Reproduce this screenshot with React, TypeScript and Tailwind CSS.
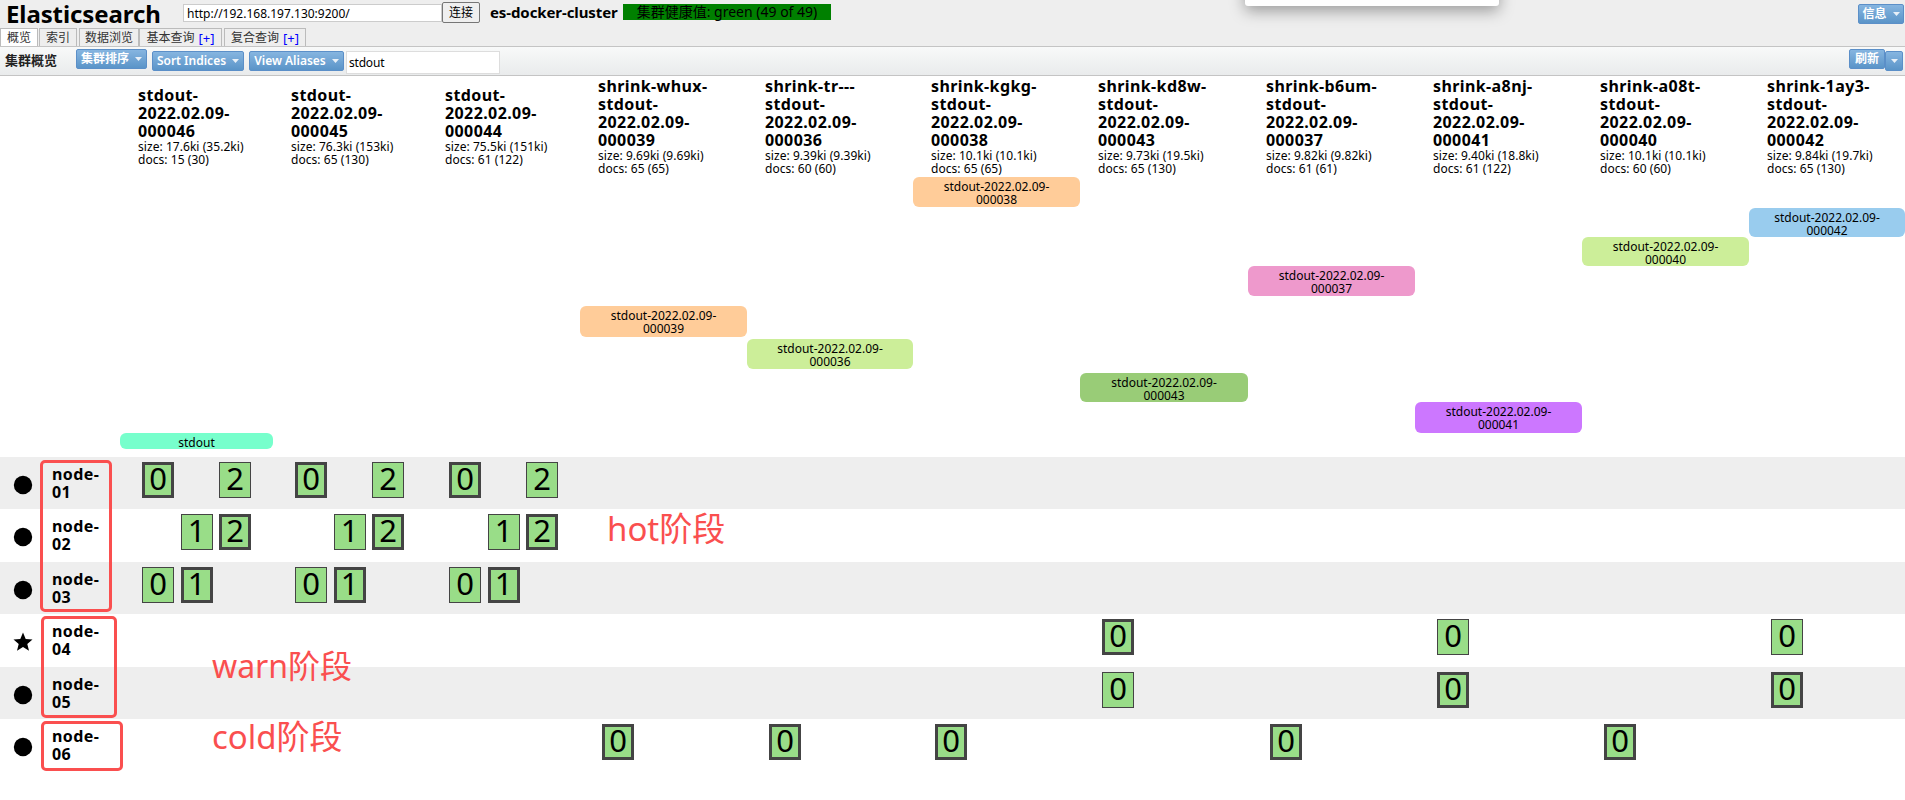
import React from "react";

const F = "font-['Tahoma','Noto_Sans','Noto_Sans_CJK_SC',sans-serif]";

const Caret = () => (
  <svg width="7" height="4" viewBox="0 0 7 4" className="shrink-0">
    <path d="M0 0h7L3.5 4z" fill="#e8f0f8" />
  </svg>
);

const BTN =
  "flex items-center justify-center gap-[6px] h-[20px] rounded-[2px] border border-[#5b8fc8] bg-gradient-to-b from-[#86b5e0] to-[#5a94c8] text-white text-[12px] font-semibold font-['Noto_Sans','Noto_Sans_CJK_SC',sans-serif]";

const tabs = [
  { w: "w-[38px]", t: "概览", active: true },
  { w: "w-[38px] ml-[1px]", t: "索引" },
  { w: "w-[60px] ml-[2px]", t: "数据浏览" },
  { w: "w-[83px] ml-[0px]", t: "基本查询", plus: true },
  { w: "w-[82px] ml-[2px]", t: "复合查询", plus: true },
];

const cols = [
  { h: ["stdout-", "2022.02.09-", "000046"], s: "size: 17.6ki (35.2ki)", d: "docs: 15 (30)" },
  { h: ["stdout-", "2022.02.09-", "000045"], s: "size: 76.3ki (153ki)", d: "docs: 65 (130)" },
  { h: ["stdout-", "2022.02.09-", "000044"], s: "size: 75.5ki (151ki)", d: "docs: 61 (122)" },
  { h: ["shrink-whux-", "stdout-", "2022.02.09-", "000039"], s: "size: 9.69ki (9.69ki)", d: "docs: 65 (65)" },
  { h: ["shrink-tr---", "stdout-", "2022.02.09-", "000036"], s: "size: 9.39ki (9.39ki)", d: "docs: 60 (60)" },
  { h: ["shrink-kgkg-", "stdout-", "2022.02.09-", "000038"], s: "size: 10.1ki (10.1ki)", d: "docs: 65 (65)" },
  { h: ["shrink-kd8w-", "stdout-", "2022.02.09-", "000043"], s: "size: 9.73ki (19.5ki)", d: "docs: 65 (130)" },
  { h: ["shrink-b6um-", "stdout-", "2022.02.09-", "000037"], s: "size: 9.82ki (9.82ki)", d: "docs: 61 (61)" },
  { h: ["shrink-a8nj-", "stdout-", "2022.02.09-", "000041"], s: "size: 9.40ki (18.8ki)", d: "docs: 61 (122)" },
  { h: ["shrink-a08t-", "stdout-", "2022.02.09-", "000040"], s: "size: 10.1ki (10.1ki)", d: "docs: 60 (60)" },
  { h: ["shrink-1ay3-", "stdout-", "2022.02.09-", "000042"], s: "size: 9.84ki (19.7ki)", d: "docs: 65 (130)" },
];

// column (1-based among index columns), row track, label, colour
const aliases = [
  { c: 6, r: 1, t: ["stdout-2022.02.09-", "000038"], bg: "#ffcc99" },
  { c: 11, r: 3, t: ["stdout-2022.02.09-", "000042"], bg: "#99ccee" },
  { c: 10, r: 5, t: ["stdout-2022.02.09-", "000040"], bg: "#ccee99" },
  { c: 8, r: 7, t: ["stdout-2022.02.09-", "000037"], bg: "#ee99cc" },
  { c: 4, r: 9, t: ["stdout-2022.02.09-", "000039"], bg: "#ffcc99" },
  { c: 5, r: 11, t: ["stdout-2022.02.09-", "000036"], bg: "#ccee99" },
  { c: 7, r: 13, t: ["stdout-2022.02.09-", "000043"], bg: "#99cc77" },
  { c: 9, r: 15, t: ["stdout-2022.02.09-", "000041"], bg: "#cc77ff" },
  { c: 1, r: 17, t: ["stdout"], bg: "#77ffcc" },
];

type S = [number, boolean] | null;
const P = (n: number): S => [n, true];
const R = (n: number): S => [n, false];
const X: S = null;

const hotA: S[][] = [
  [P(0), X, R(2)],
  [X, R(1), P(2)],
  [R(0), P(1), X],
];

const nodes: { n: string; star?: boolean; h: string; shards: Record<number, S[]> }[] = [
  { n: "01", h: "h-[52px]", shards: { 0: hotA[0], 1: hotA[0], 2: hotA[0] } },
  { n: "02", h: "h-[53px]", shards: { 0: hotA[1], 1: hotA[1], 2: hotA[1] } },
  { n: "03", h: "h-[52px]", shards: { 0: hotA[2], 1: hotA[2], 2: hotA[2] } },
  { n: "04", star: true, h: "h-[53px]", shards: { 6: [P(0)], 8: [R(0)], 10: [R(0)] } },
  { n: "05", h: "h-[52px]", shards: { 6: [R(0)], 8: [P(0)], 10: [P(0)] } },
  { n: "06", h: "h-[52px]", shards: { 3: [P(0)], 4: [P(0)], 5: [P(0)], 7: [P(0)], 9: [P(0)] } },
];

const COLS = "grid-cols-[120px_153px_154px_153px_167px_166px_167px_168px_167px_167px_167px_156px]";

const Shard = ({ s }: { s: S }) =>
  s ? (
    <div
      className={`w-[32px] h-[36px] shrink-0 mr-[6.5px] pb-[3px] flex items-center justify-center bg-[#99dd88] border-[#444444] text-[31px] leading-none text-black font-['Noto_Sans',sans-serif] ${
        s[1] ? "border-[3px]" : "border"
      }`}
    >
      {s[0]}
    </div>
  ) : (
    <div className="w-[32px] h-[36px] shrink-0 mr-[6.5px]" />
  );

const Marker = ({ star }: { star?: boolean }) => (
  <svg width="20" height="20" viewBox="0 0 20 20" className="ml-[13px] mr-[6px] shrink-0">
    {star ? (
      <path d="M10 0.5l2.7 6.4 6.8.5-5.2 4.5 1.7 6.8L10 15l-6 3.7 1.7-6.8L.5 7.4l6.8-.5z" fill="#000" />
    ) : (
      <ellipse cx="10" cy="10" rx="9.2" ry="9.2" fill="#000" />
    )}
  </svg>
);

export default function App() {
  return (
    <div className={`relative w-[1905px] h-[800px] overflow-hidden bg-white text-black ${F}`}>
      {/* header */}
      <div className="bg-[#eeeeee] h-[46px] relative">
        <div className="flex items-start h-[28px]">
          <div className="ml-[6px] w-[177px] text-[24px] leading-[28px] font-bold font-['Noto_Sans',sans-serif] -tracking-[0.1px]">
            Elasticsearch
          </div>
          <input
            readOnly
            value="http://192.168.197.130:9200/"
            className="mt-[4px] w-[259px] h-[18px] bg-white border border-[#cccccc] px-[3px] text-[12px] leading-[16px] outline-none font-['Noto_Sans',sans-serif]"
          />
          <button className="mt-[2px] w-[38px] h-[21px] bg-[#efefef] border border-[#767676] rounded-[2px] text-[12px] leading-[18px] text-black">
            连接
          </button>
          <div className="ml-[10px] w-[133px] mt-[2px] text-[15px] leading-[20px] -tracking-[0.1px] font-bold font-['Noto_Sans',sans-serif] whitespace-nowrap">
            es-docker-cluster
          </div>
          <div className="mt-[4px] w-[208px] h-[16px] bg-[#008000] text-center text-[14px] leading-[16px] text-black whitespace-nowrap">
            集群健康值: green (49 of 49)
          </div>
          <div className="flex-1" />
          <div className={`${BTN} mt-[4px] mr-[1px] w-[46px]`}>
            信息
            <Caret />
          </div>
        </div>
        <div className="flex h-[18px] items-end">
          {tabs.map((t) => (
            <div
              key={t.t}
              className={`${t.w} h-[18px] flex items-center justify-center gap-[4px] border border-b-0 border-[#bbbbbb] text-[12px] leading-[16px] text-[#333333] ${
                t.active ? "bg-white" : "bg-[#eeeeee]"
              }`}
            >
              {t.t}
              {t.plus && <span className="text-[#0000ff] text-[13px]">[+]</span>}
            </div>
          ))}
        </div>
      </div>
      {/* toolbar */}
      <div className="h-[30px] border-y border-[#c4c4c4] bg-gradient-to-b from-[#f8f9f9] to-[#e9ebec] flex items-start">
        <div className="ml-[5px] w-[71px] mt-[3px] text-[13px] leading-[20px] font-bold text-[#222222]">集群概览</div>
        <div className={`${BTN} mt-[2px] w-[71px]`}>
          集群排序
          <Caret />
        </div>
        <div className={`${BTN} mt-[4px] ml-[5px] w-[92px]`}>
          Sort Indices
          <Caret />
        </div>
        <div className={`${BTN} mt-[4px] ml-[5px] w-[95px]`}>
          View Aliases
          <Caret />
        </div>
        <input
          readOnly
          value="stdout"
          className="ml-[2px] mt-[4px] w-[154px] h-[23px] bg-white border border-[#dddddd] px-[2px] text-[12px] -tracking-[0.2px] outline-none font-['Noto_Sans',sans-serif]"
        />
        <div className="flex-1" />
        <div className={`${BTN} mt-[2px] w-[36px]`}>刷新</div>
        <div className={`${BTN} mt-[4px] w-[18px] mr-[2px]`}>
          <Caret />
        </div>
      </div>

      {/* index headers */}
      <div className={`grid ${COLS} h-[101px] items-center`}>
        <div />
        {cols.map((c) => (
          <div key={c.h.join()} className="pl-[18px] whitespace-nowrap pb-[1px]">
            {c.h.map((l) => (
              <div key={l} className="text-[16px] leading-[18px] tracking-[0.4px] font-bold font-['Noto_Sans',sans-serif]">
                {l}
              </div>
            ))}
            <div className="text-[12px] leading-[13px] tracking-[0.05px] font-['Noto_Sans',sans-serif]">{c.s}</div>
            <div className="text-[12px] leading-[13px] tracking-[0.05px] font-['Noto_Sans',sans-serif]">{c.d}</div>
          </div>
        ))}
      </div>

      {/* alias tracks */}
      <div
        className={`grid ${COLS} grid-rows-[30px_1px_29px_0px_29px_0px_30px_10px_31px_2px_30px_4px_29px_0px_31px_0px_16px]`}
      >
        {aliases.map((a) => (
          <div
            key={a.t.join()}
            style={{ gridColumn: a.c + 1, gridRow: a.r, backgroundColor: a.bg }}
            className="rounded-[6px] text-center text-[12px] leading-[13px] pt-[3px] font-['Noto_Sans',sans-serif]"
          >
            {a.t.map((l) => (
              <div key={l}>{l}</div>
            ))}
          </div>
        ))}
      </div>
      <div className="h-[8px]" />

      {/* node rows */}
      {nodes.map((n, i) => (
        <div key={n.n} className={`grid ${COLS} ${n.h} ${i % 2 === 0 ? "bg-[#eeeeee]" : "bg-white"}`}>
          <div className="flex items-center pt-[3px]">
            <Marker star={n.star} />
            <div className="w-[60px] -mt-[4px] pl-[13px] text-[16px] leading-[18px] tracking-[0.4px] font-bold font-['Noto_Sans',sans-serif]">
              node-
              <br />
              {n.n}
            </div>
          </div>
          {cols.map((_, ci) => (
            <div key={ci} className="flex items-start pl-[22px] pt-[5px] overflow-hidden">
              {(n.shards[ci] || []).map((s, si) => (
                <Shard key={si} s={s} />
              ))}
            </div>
          ))}
        </div>
      ))}

      {/* screenshot annotations, drawn over the page */}
      <div className="absolute left-[40px] top-[460px] w-[72px] h-[152px] border-[3px] border-[#fa4f4f] rounded-[5px]" />
      <div className="absolute left-[41px] top-[616px] w-[76px] h-[102px] border-[3px] border-[#fa4f4f] rounded-[5px]" />
      <div className="absolute left-[41px] top-[721px] w-[82px] h-[50px] border-[3px] border-[#fa4f4f] rounded-[5px]" />
      <div className="absolute left-[607px] top-[507px] text-[33px] leading-[44px] text-[#fa4f4f] whitespace-nowrap font-['Noto_Sans','Noto_Sans_CJK_SC',sans-serif]">
        hot阶段
      </div>
      <div className="absolute left-[212px] top-[644px] text-[32px] leading-[44px] text-[#fa4f4f] whitespace-nowrap font-['Noto_Sans','Noto_Sans_CJK_SC',sans-serif]">
        warn阶段
      </div>
      <div className="absolute left-[212px] top-[715px] text-[33px] leading-[44px] text-[#fa4f4f] whitespace-nowrap font-['Noto_Sans','Noto_Sans_CJK_SC',sans-serif]">
        cold阶段
      </div>
      {/* floating panel cut by the top edge */}
      <div className="absolute left-[1245px] -top-[20px] w-[254px] h-[26px] bg-white rounded-[3px] shadow-[0_5px_15px_rgba(0,0,0,0.35)]" />
    </div>
  );
}
